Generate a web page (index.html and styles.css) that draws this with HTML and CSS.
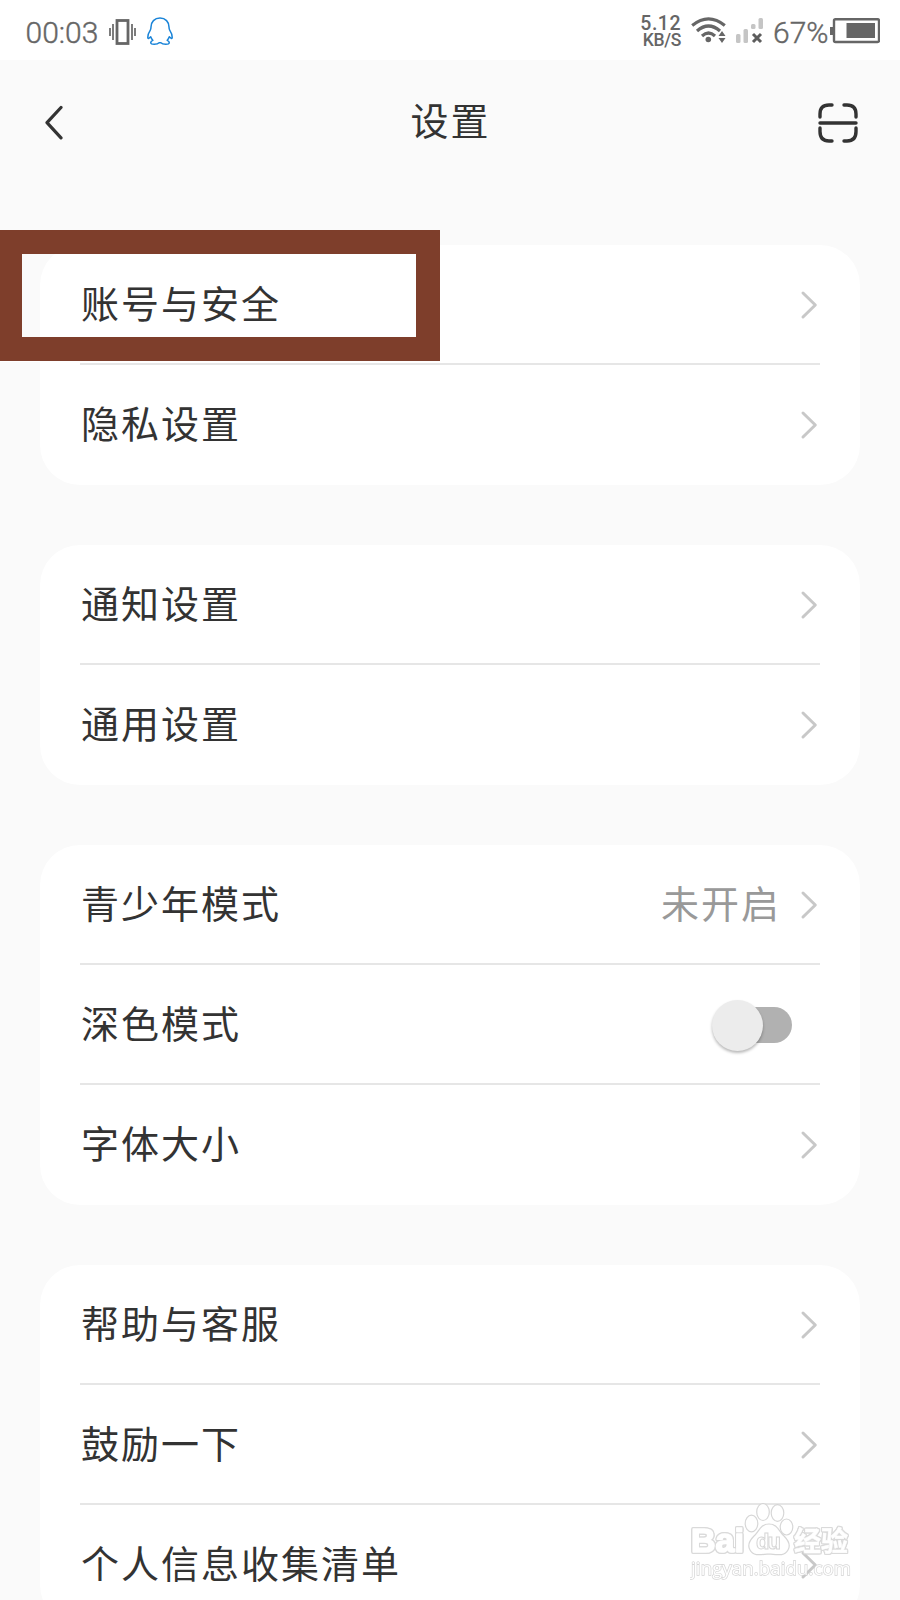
FILE: index.html
```html
<!DOCTYPE html>
<html lang="zh-CN">
<head>
<meta charset="utf-8">
<title>设置</title>
<link rel="stylesheet" href="styles.css">
</head>
<body>
<svg class="defs" width="0" height="0">
  <symbol id="chevron" viewBox="0 0 18 30"><path d="M3 3 15.300 15 3 27" fill="none" stroke="#c8c8c8" stroke-width="3" stroke-linecap="round" stroke-linejoin="round"/></symbol>
</svg>
<div class="screen">
  <header class="status">
    <span class="clock">00:03</span>
    <svg class="vibrate" width="28" height="26" viewBox="0 0 28 26" fill="none" stroke="#666"><rect x="8" y="1.500" width="11" height="23" stroke-width="2.800"/><path d="M1 9v8M4 5v16M23 5v16M26 9v8" stroke-width="1.700"/></svg>
    <svg class="penguin" width="26" height="29" viewBox="0 0 26 29" fill="none" stroke="#1a84d8" stroke-width="1.500" stroke-linejoin="round"><path d="M13 1C7.500 1 4 5 4 10c0 1.500-.2 2.200-.7 3.200C1.500 16 .7 18 .8 20.500c.1 1.500.9 1.300 2.900-.7.5 1.500 1.100 2.600 2.100 3.600-1.700.7-2.200 1.500-2 2.600.2 1.600 6.500 1.700 8.300-.3h1.800c1.800 2 8.100 1.900 8.300.3.200-1.100-.3-1.900-2-2.600 1-1 1.600-2.100 2.100-3.600 2 2 2.800 2.200 2.900.7.100-2.500-.7-4.500-2.500-7.300-.5-1-.7-1.700-.7-3.200C22 5 18.500 1 13 1z"/></svg>
    <div class="speed"><span class="rate">5.12</span><span class="unit">KB/S</span></div>
    <svg class="wifi" width="36" height="27" viewBox="0 0 36 27" fill="none" stroke="#666" stroke-width="3.200"><path d="M1.200 8.500Q17.500-4.800 33.800 8.500M6 14Q17.500 4 29 14M11 19Q17.500 13 24 19"/><circle cx="17.300" cy="22.500" r="2.800" fill="#666" stroke="none"/><path d="M31 14l3.500 5h-7zM31 26l3.500-5h-7z" fill="#666" stroke="none"/></svg>
    <svg class="signal" width="28" height="26" viewBox="0 0 28 26"><g fill="#c5c5c5"><rect x="0" y="16" width="4.500" height="9" rx="1.500"/><rect x="7.500" y="11" width="4.500" height="14" rx="1.500"/><rect x="15" y="6" width="4.500" height="5" rx="1.500"/><rect x="22.500" y="0" width="4.500" height="11" rx="1.500"/></g><path d="M17 16l8 8M25 16l-8 8" stroke="#5d5d5d" stroke-width="3"/></svg>
    <span class="percent">67%</span>
    <svg class="battery" width="50" height="26" viewBox="0 0 50 26"><rect x="4" y="1.200" width="45" height="22.800" rx="1.500" fill="none" stroke="#666" stroke-width="2.400"/><path d="M0 9h4v8H0z" fill="#666"/><path d="M16.500 5H45v15H16.500z" fill="#666"/></svg>
  </header>
  <nav class="titlebar">
    <svg width="18" height="36" viewBox="0 0 18 36" fill="none" stroke="#333" stroke-width="3.200" stroke-linecap="round" stroke-linejoin="round"><path d="M16 2.500 2 17.700 16 32.900"/></svg>
    <h1 class="title">设置</h1>
    <svg width="40" height="40" viewBox="0 0 40 40" fill="none" stroke="#333" stroke-width="3.400" stroke-linecap="round"><path d="M2 14V11Q2 2 11 2H14M26 2H29Q38 2 38 11V14M2 25V28.500Q2 38 11 38H14M26 38H29Q38 38 38 28.500V25M2 20H38"/></svg>
  </nav>
  <main class="groups">
    <section class="card">
      <div class="row"><span>账号与安全</span><svg class="chev"><use href="#chevron"/></svg></div>
      <div class="row"><span>隐私设置</span><svg class="chev"><use href="#chevron"/></svg></div>
    </section>
    <section class="card">
      <div class="row"><span>通知设置</span><svg class="chev"><use href="#chevron"/></svg></div>
      <div class="row"><span>通用设置</span><svg class="chev"><use href="#chevron"/></svg></div>
    </section>
    <section class="card">
      <div class="row"><span>青少年模式</span><span class="value">未开启</span><svg class="chev"><use href="#chevron"/></svg></div>
      <div class="row"><span>深色模式</span><div class="switch"><div class="knob"></div></div></div>
      <div class="row"><span>字体大小</span><svg class="chev"><use href="#chevron"/></svg></div>
    </section>
    <section class="card">
      <div class="row"><span>帮助与客服</span><svg class="chev"><use href="#chevron"/></svg></div>
      <div class="row"><span>鼓励一下</span><svg class="chev"><use href="#chevron"/></svg></div>
      <div class="row"><span>个人信息收集清单</span><svg class="chev"><use href="#chevron"/></svg></div>
    </section>
  </main>
  <div class="highlight"></div>
  <svg class="watermark" width="170" height="86" viewBox="0 0 170 86">
    <g class="mark"><text x="1" y="52" font-size="34" textLength="53">Bai</text><text class="cjk" x="104" y="51" font-size="27" textLength="54">经验</text></g>
    <g fill="#fff" stroke="#d0d0d0" stroke-width="1.200">
      <ellipse cx="61.500" cy="23.500" rx="6.300" ry="8.300"/><ellipse cx="73" cy="12" rx="6.300" ry="8.500"/><ellipse cx="87.500" cy="13" rx="6.300" ry="8.300"/><ellipse cx="96.500" cy="27" rx="6.300" ry="8"/>
      <path d="M79 24c-9 0-10 8-15 12-5 5-7 9-4 14 3 6 9 5 19 4 10 1 16 2 19-4 3-5 1-9-4-14-5-4-6-12-15-12z"/>
      <text class="du" x="66" y="49" font-size="22" textLength="25">du</text>
    </g>
    <text class="url" x="1" y="75" font-size="18.500" textLength="160">jingyan.baidu.com</text>
  </svg>
</div>
</body>
</html>
```
FILE: styles.css
```css
* { box-sizing: border-box; }
body { margin: 0; background: #fafafa; color: #333; font-family: "Noto Sans CJK SC", sans-serif; }
.defs { position: absolute; }
.screen { position: relative; width: 900px; height: 1600px; overflow: hidden; background: #fafafa; }
.status { display: flex; align-items: flex-start; height: 60px; padding-left: 25px; background: #fff; color: #666; font-family: Roboto, sans-serif; }
.status svg { flex: none; }
.clock, .percent { font-size: 30px; line-height: 36px; margin-top: 15px; white-space: nowrap; font-weight: 300; -webkit-text-stroke: .4px #666; }
.clock { width: 75px; padding-left: .5px; }
.vibrate { margin: 19px 0 0 9px; }
.penguin { margin: 17px 0 0 10px; }
.speed { display: flex; flex-direction: column; align-items: flex-end; width: 60px; margin: 15px 0 0 448px; font-weight: 500; }
.rate { font-size: 19.5px; line-height: 17px; letter-spacing: .5px; }
.unit { font-size: 17.5px; line-height: 16px; letter-spacing: -.3px; }
.wifi { margin: 17px 0 0 10px; }
.signal { margin: 18px 0 0 9px; }
.percent { width: 54px; margin-left: 9px; }
.battery { margin: 18px 0 0 3px; }
.titlebar { display: flex; align-items: center; justify-content: space-between; height: 125px; padding: 0 42px 0 45px; }
.title { margin: 0; padding: 0 0 7px 20px; font-size: 38px; line-height: 56px; font-weight: 400; letter-spacing: 2px; }
.groups { display: flex; flex-direction: column; gap: 60px; padding: 60px 40px 0; }
.card { padding: 0 40px; border-radius: 40px; background: #fff; }
.row { display: flex; align-items: center; height: 120px; border-bottom: 2px solid #e6e6e6; font-size: 38px; line-height: 56px; letter-spacing: 2px; }
.row > span { padding-bottom: 4px; }
.row > span:first-child { padding-left: 1px; }
.row:last-child { border-bottom-color: transparent; }
.chev { width: 18px; height: 30px; margin: 2px 2px 0 auto; }
.value { margin-left: auto; color: #999; }
.value + .chev { margin-left: 19px; }
.switch { width: 72px; height: 36px; margin: 2px 28px 0 auto; border-radius: 18px; background: #b1b1b1; }
.knob { width: 51px; height: 51px; margin: -7px 0 0 -8px; border-radius: 50%; background: #ececec; box-shadow: 0 2px 3px rgba(0, 0, 0, .28); }
.highlight { position: absolute; left: 0; top: 230px; width: 440px; height: 131px; border: solid #7e3e2b; border-width: 24px 24px 24px 22px; box-shadow: 0 1px 0 #fff; }
.watermark { position: absolute; left: 690px; top: 1500px; opacity: .85; font-family: "Liberation Sans", sans-serif; font-weight: 700; }
.cjk { font-family: "Noto Sans CJK SC", sans-serif; stroke-width: .5px; }
.mark { fill: #fff; stroke: #fff; stroke-width: 1.6px; stroke-linejoin: round; filter: drop-shadow(1px 0 0 #d4d4d4) drop-shadow(-1px 0 0 #d4d4d4) drop-shadow(0 1px 0 #d4d4d4) drop-shadow(0 -1px 0 #d4d4d4); }
.du { stroke-width: 1px; }
.url { font-family: "Open Sans", sans-serif; font-weight: 400; fill: #fff; stroke: #cecece; stroke-width: 1.4px; paint-order: stroke; }
```
